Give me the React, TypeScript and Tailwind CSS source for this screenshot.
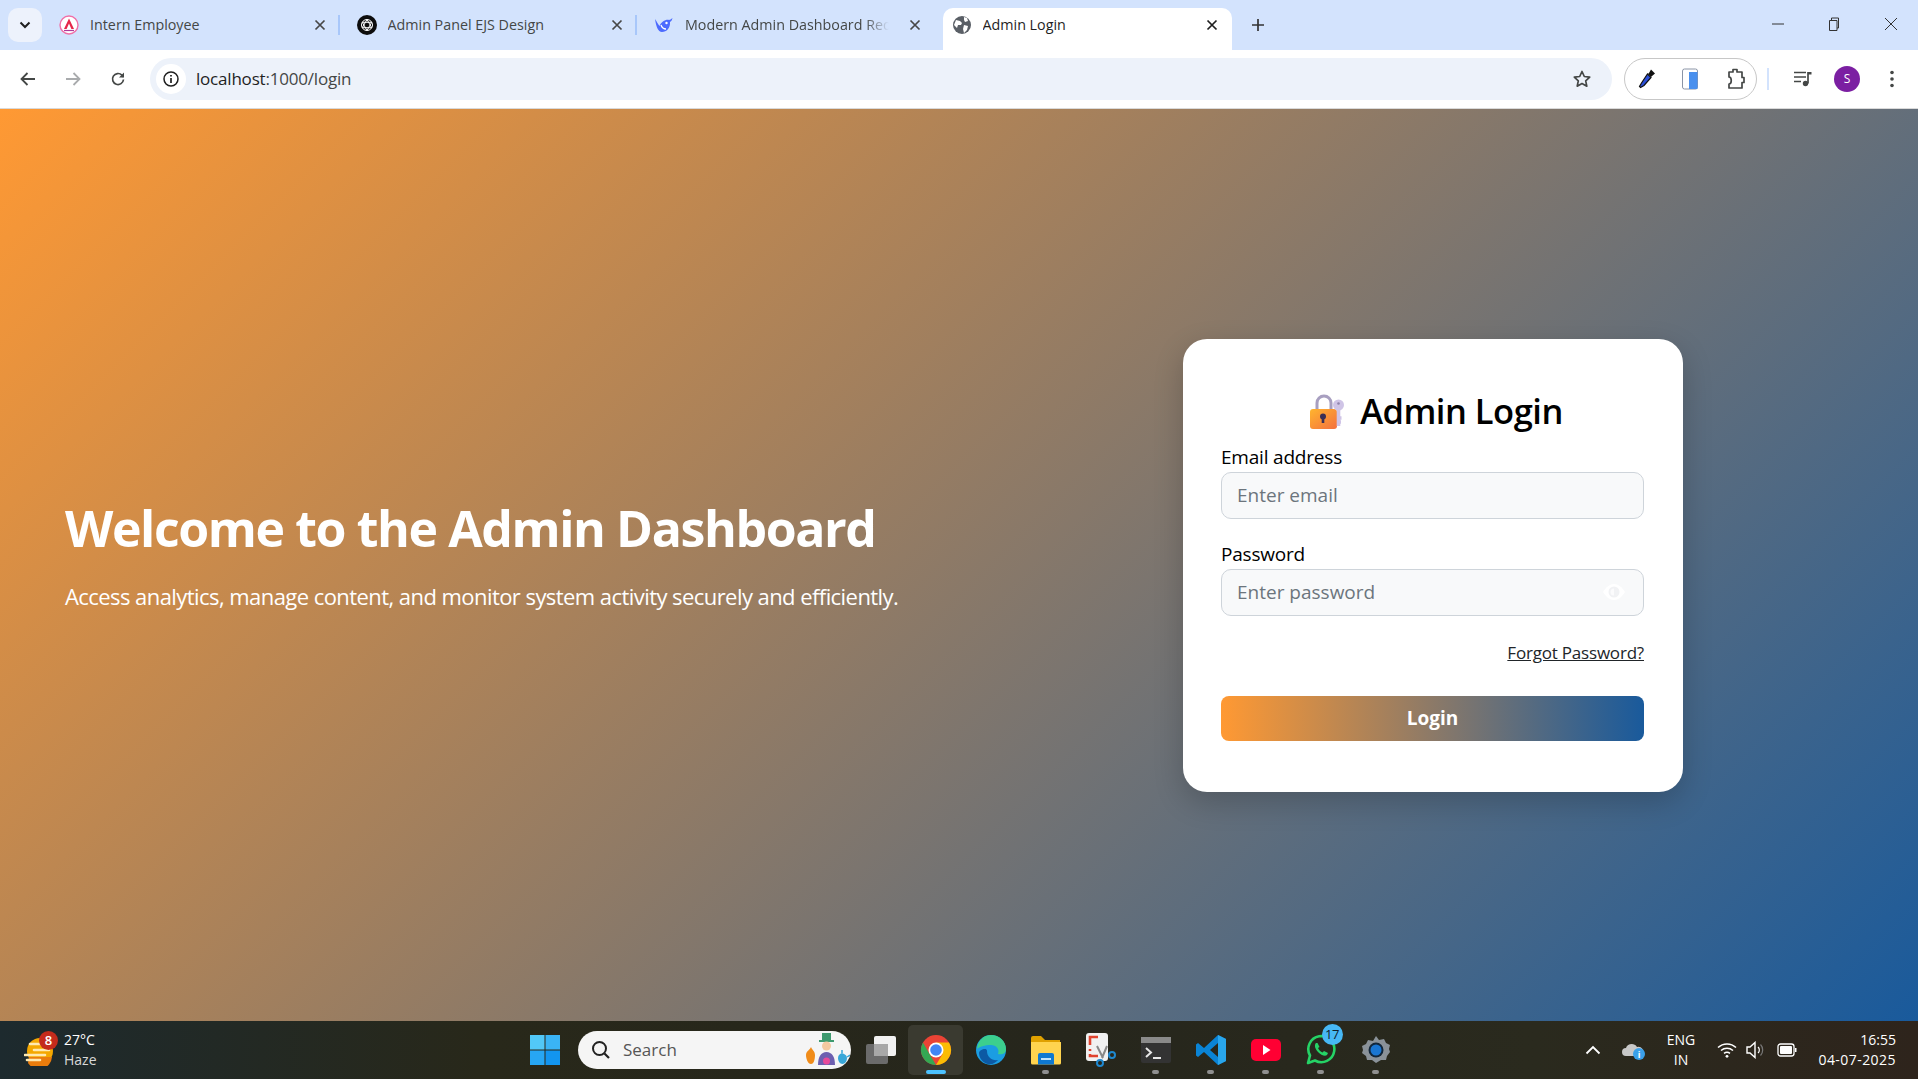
import React from "react";

const font = { fontFamily: '"Open Sans","Noto Sans",sans-serif' };

function Close({ dark }: { dark?: boolean }) {
  return (
    <svg width="12" height="12" viewBox="0 0 12 12" className="shrink-0">
      <path d="M1.500 1.500l9 9M10.500 1.500l-9 9" stroke={dark ? "#1f1f1f" : "#474747"} strokeWidth="1.700" />
    </svg>
  );
}

function TabIcon({ kind }: { kind: string }) {
  if (kind === "a")
    return (
      <svg width="20" height="20" viewBox="0 0 20 20">
        <circle cx="10" cy="10" r="9" fill="#fff" stroke="#f070a8" strokeWidth="1.400" />
        <path d="M10 3.500L15 14h-2.600L10 8.600 7.600 14H5z" fill="#e5274a" />
        <path d="M5 15.500h10" stroke="#b03a9a" strokeWidth="1.200" />
      </svg>
    );
  if (kind === "g")
    return (
      <svg width="20" height="20" viewBox="0 0 20 20">
        <circle cx="10" cy="10" r="10" fill="#0d0d0d" />
        <g fill="none" stroke="#fff" strokeWidth="1">
          <circle cx="10" cy="10" r="5.500" />
          <path d="M10 4.500l4.700 8.200H5.300zM10 15.500l-4.700-8.200h9.400z" />
        </g>
      </svg>
    );
  if (kind === "d")
    return (
      <svg width="20" height="20" viewBox="0 0 20 20">
        <path d="M1 4c2 3 3 5 4.500 7C7 7 12 4 15 5c1 0 2-1 3.500-2-.5 2-1 3-2.500 4 .5 6-3.500 10-8 10-4 0-6-6-7-13z" fill="#4d6bfe" />
        <circle cx="12.500" cy="8" r="1.200" fill="#fff" />
        <path d="M7 10c1 3 3 4 5 4" stroke="#fff" strokeWidth="1.300" fill="none" />
      </svg>
    );
  return (
    <svg width="18" height="18" viewBox="0 0 18 18">
      <circle cx="9" cy="9" r="9" fill="#5a5f66" />
      <path d="M3 4l4 1 2 2-1 2-3 0-1 3-3-3zM11 1l3 1 1 3-3 1-1-2zM11 9l4 1-1 4-3 3-1-4z" fill="#fff" />
    </svg>
  );
}

function Tab({ icon, title, active, fade }: { icon: string; title: string; active?: boolean; fade?: boolean }) {
  return (
    <div className={`relative flex h-[42px] shrink-0 items-center pr-[14px] pb-[8px] ${active ? "ml-[8px] w-[289.500px] rounded-t-[10px] bg-white pl-[9px] text-[#1f1f1f]" : "w-[297.500px] pl-[17px] text-[#444746]"}`}>
      <span className="flex w-[20px] shrink-0 justify-center"><TabIcon kind={icon} /></span>
      <span className={`ml-[11px] flex-1 overflow-hidden whitespace-nowrap text-[14.300px] ${fade ? "mr-[20px] [mask-image:linear-gradient(to_right,black_88%,transparent)]" : ""}`}>{title}</span>
      <Close dark={active} />
      {!active && !fade && <span className="absolute right-0 top-[7px] h-[20px] w-[2px] bg-[#a8c7fa]" />}
    </div>
  );
}

function BrowserChrome() {
  return (
    <div className="shrink-0" style={font}>
      <div className="flex h-[50px] items-end bg-[#d3e3fd] pl-[8px]">
        <div className="mb-[8px] mr-[6px] flex h-[34px] w-[34px] items-center justify-center rounded-[10px] bg-[#edf2fc]">
          <svg width="12" height="8" viewBox="0 0 12 8"><path d="M1.500 1.500L6 6l4.500-4.500" fill="none" stroke="#1f1f1f" strokeWidth="2" /></svg>
        </div>
        <div className="flex h-[42px] items-center">
          <div className="-ml-[6px] flex">
            <Tab icon="a" title="Intern Employee" />
            <Tab icon="g" title="Admin Panel EJS Design" />
            <Tab icon="d" title="Modern Admin Dashboard Redesign" fade />
            <Tab icon="w" title="Admin Login" active />
          </div>
          <svg width="14" height="14" viewBox="0 0 14 14" className="ml-[19px] -mt-[8px]"><path d="M7 1v12M1 7h12" stroke="#333" strokeWidth="1.700" /></svg>
        </div>
        <div className="ml-auto flex h-[50px] items-center text-[#333]">
          <svg width="14" height="14" viewBox="0 0 14 14" className="mr-[42px] -mt-[2px]"><path d="M1 7h12" stroke="#333" /></svg>
          <svg width="14" height="16" viewBox="0 0 14 16" className="mr-[43px] -mt-[2px]"><path d="M2.500 4.500h7.500v10h-7.500zM4.500 4.500v-2.500h7v10h-1.500" fill="none" stroke="#333" /></svg>
          <svg width="14" height="14" viewBox="0 0 14 14" className="mr-[20px] -mt-[2px]"><path d="M1 1l12 12M13 1L1 13" stroke="#333" /></svg>
        </div>
      </div>
      <div className="flex h-[58px] items-center bg-white">
        <div className="flex w-[150px] items-center pl-[19px]">
          <svg width="18" height="16" viewBox="0 0 18 16"><path d="M16 8H3M8.500 2L2.500 8l6 6" fill="none" stroke="#444746" strokeWidth="1.800" /></svg>
          <svg width="18" height="16" viewBox="0 0 18 16" className="ml-[27px]"><path d="M2 8h13M9.500 2l6 6-6 6" fill="none" stroke="#a9abad" strokeWidth="1.800" /></svg>
          <svg width="18" height="18" viewBox="0 0 18 18" className="ml-[27px]"><path d="M14.500 9.500a5.500 5.500 0 1 1-1.600-4.400L14.500 7" fill="none" stroke="#444746" strokeWidth="1.700" /><path d="M15 2.500V7.500H10z" fill="#444746" /></svg>
        </div>
        <div className="flex h-[42px] w-[1462px] items-center rounded-full bg-[#edf2fa] pl-[5px] pr-[20px]">
          <div className="flex h-[30px] w-[30px] items-center justify-center rounded-full bg-white ml-[1px]">
            <svg width="18" height="18" viewBox="0 0 18 18"><circle cx="9" cy="9" r="7" fill="none" stroke="#1f1f1f" strokeWidth="1.500" /><path d="M9 8v5M9 5v1.600" stroke="#1f1f1f" strokeWidth="1.700" /></svg>
          </div>
          <span className="ml-[10px] text-[17px] tracking-[-0.2px] text-[#1f1f1f]">localhost<span className="text-[#444746]">:1000/login</span></span>
          <svg width="20" height="20" viewBox="0 0 20 20" className="ml-auto"><path d="M10 2.500l2.300 5 5.400.6-4 3.700 1.100 5.400-4.800-2.700-4.800 2.700 1.100-5.400-4-3.700 5.400-.6z" fill="none" stroke="#444746" strokeWidth="1.700" strokeLinejoin="round" /></svg>
        </div>
        <div className="ml-[12px] flex h-[42px] w-[133px] items-center justify-between rounded-full border border-[#c7c7c7] pl-[12px] pr-[10px]">
          <svg width="20" height="22" viewBox="0 0 20 22"><path d="M14 1.500l4 4-3 2.500-1 1-3-3 1-1z" fill="#111" /><path d="M10.500 6l3.500 3.500-7 8-3.500 2-1-1 2-3.500z" fill="#2b4fd8" stroke="#111" strokeWidth="1.200" /></svg>
          <svg width="18" height="24" viewBox="0 0 18 24"><rect x="1.500" y="2" width="15" height="20" rx="2" fill="#fff" stroke="#8a94a6" /><rect x="8" y="5" width="8.500" height="17" fill="#4a90ee" /></svg>
          <svg width="20" height="24" viewBox="0 0 20 24" className="ml-[4px]"><path d="M3 5h4V2.500h4V5h5v5.500h2v5h-2V21H3v-4c3 0 3-7 0-7z" fill="#fff" stroke="#444746" strokeWidth="1.700" strokeLinejoin="round" /></svg>
        </div>
        <span className="ml-[10px] h-[22px] w-[2px] bg-[#d3e3fd]" />
        <svg width="20" height="20" viewBox="0 0 20 20" className="ml-[24px]"><path d="M1 3.500h12M1 8h12M1 12.500h7" stroke="#444746" strokeWidth="1.700" /><path d="M15 3v11.500" stroke="#444746" strokeWidth="1.700" /><circle cx="12.500" cy="14.500" r="2.700" fill="#444746" /><path d="M15 3h3.500v2.500H15z" fill="#444746" /></svg>
        <div className="ml-[21px] flex h-[26px] w-[26px] items-center justify-center rounded-full bg-[#7b1fa2] text-[12px] text-white">S</div>
        <svg width="4" height="18" viewBox="0 0 4 18" className="ml-[30px]"><circle cx="2" cy="2.500" r="1.800" fill="#444746" /><circle cx="2" cy="9" r="1.800" fill="#444746" /><circle cx="2" cy="15.500" r="1.800" fill="#444746" /></svg>
      </div>
      <div className="h-px bg-[#d9d9d9]" />
    </div>
  );
}

function LockEmoji() {
  return (
    <svg width="36" height="36" viewBox="0 0 36 36" className="shrink-0">
      <path d="M8 17V9a7 7 0 0 1 14 0v8" fill="none" stroke="#a89fc0" strokeWidth="3" />
      <rect x="1" y="15" width="27" height="20" rx="3" fill="url(#lk)" />
      <circle cx="14" cy="22.500" r="3" fill="#3a2f55" />
      <path d="M14 23v6" stroke="#3a2f55" strokeWidth="2.600" />
      <circle cx="29.500" cy="11" r="5.500" fill="#cfc4e6" />
      <circle cx="29.500" cy="9.500" r="1.300" fill="#8f84ac" />
      <path d="M29.500 15v17M29.500 24h3M29.500 28h2.500" stroke="#cfc4e6" strokeWidth="3.600" />
      <defs>
        <linearGradient id="lk" x1="0" y1="0" x2="1" y2="1">
          <stop offset="0" stopColor="#ffb52e" />
          <stop offset="1" stopColor="#f4703f" />
        </linearGradient>
      </defs>
    </svg>
  );
}

function LoginCard() {
  return (
    <div className="flex h-[453px] w-[500px] flex-col rounded-[24px] bg-white pl-[38px] pr-[39px] pt-[54px] shadow-[0_10px_30px_rgba(0,0,0,0.2)]">
      <div className="ml-[7px] flex h-[38px] items-center justify-center">
        <LockEmoji />
        <h2 className="ml-[15px] text-[34.500px] font-semibold leading-none tracking-[-0.5px] text-black">Admin Login</h2>
      </div>
      <label className="mt-[12px] text-[19px] leading-[29px] tracking-[-0.2px] text-black">Email address</label>
      <div className="flex h-[47px] items-center rounded-[10px] border border-[#ced4da] bg-[#f8f9fa] px-[15px] text-[19px] text-[#6c757d]">Enter email</div>
      <label className="mt-[21px] text-[19px] leading-[29px] tracking-[-0.2px] text-black">Password</label>
      <div className="flex h-[47px] items-center justify-between rounded-[10px] border border-[#ced4da] bg-[#f8f9fa] pl-[15px] pr-[18px] text-[19px] text-[#6c757d]">
        <span>Enter password</span>
        <svg width="22" height="16" viewBox="0 0 22 16"><path d="M0 8c3-5 7-8 11-8s8 3 11 8c-3 5-7 8-11 8S3 13 0 8z" fill="#ffffff" /><circle cx="11" cy="8" r="5.500" fill="#f1f2f4" /><path d="M11 4.500a3.500 3.500 0 0 0 0 7z" fill="#fbfbfc" /></svg>
      </div>
      <div className="mt-[25px] text-right text-[17px] leading-[24px] tracking-[-0.2px] text-[#212529] underline">Forgot Password?</div>
      <button className="mt-[31px] h-[45px] rounded-[8px] bg-[linear-gradient(to_right,#ff9933,#195a9c)] text-[19px] font-bold text-white">Login</button>
    </div>
  );
}

function Win() {
  return (
    <svg width="30" height="30" viewBox="0 0 30 30">
      <rect x="0" y="0" width="14.500" height="14.500" fill="#52c8f7" />
      <rect x="15.500" y="0" width="14.500" height="14.500" fill="#3ab4f5" />
      <rect x="0" y="15.500" width="14.500" height="14.500" fill="#27a6f3" />
      <rect x="15.500" y="15.500" width="14.500" height="14.500" fill="#1295f0" />
    </svg>
  );
}

function AppSlot({ children, dot, active }: { children: React.ReactNode; dot?: boolean; active?: boolean }) {
  return (
    <div className={`relative flex h-[50px] w-[55px] items-center justify-center ${active ? "rounded-[5px] bg-[#3a3a30]" : ""}`}>
      {children}
      {dot && <span className="absolute bottom-[1px] h-[4px] w-[7px] rounded-full bg-[#8f8f8f]" />}
      {active && <span className="absolute bottom-[1px] h-[4px] w-[20px] rounded-full bg-[#4cc2ff]" />}
    </div>
  );
}

function Taskbar() {
  return (
    <div className="flex h-[58px] shrink-0 items-center bg-[linear-gradient(to_right,#1d2a2e,#28281a_25%,#26261c_55%,#2a2a1e_80%,#2e241c)] text-white" style={font}>
      <div className="flex w-[530px] items-center pl-[24px]">
        <div className="relative h-[30px] w-[30px]">
          <svg width="30" height="30" viewBox="0 0 30 30" className="absolute top-[1px]">
            <circle cx="16" cy="15" r="13" fill="#f5a800" />
            <path d="M4 27a13 13 0 0 0 24 -6H5z" fill="#ea7c0c" />
            <path d="M6 8h16M10 14h15M1 19h20M3 24h13" stroke="#ffe9b0" strokeWidth="2.600" strokeLinecap="round" />
          </svg>
          <span className="absolute -top-[4px] left-[15px] flex h-[19px] w-[19px] items-center justify-center rounded-full bg-[#c42b1c] text-[13px] font-semibold">8</span>
        </div>
        <div className="ml-[10px] -mt-[1px] text-[14px] leading-[20px]">
          <div>27°C</div>
          <div className="text-[#d8d8d8]">Haze</div>
        </div>
      </div>
      <Win />
      <div className="ml-[18px] flex h-[38px] w-[273px] items-center rounded-full bg-[#f5f5f5] pl-[13px] text-[#555]">
        <svg width="20" height="20" viewBox="0 0 20 20"><circle cx="8.500" cy="8.500" r="6.500" fill="none" stroke="#222" strokeWidth="2" /><path d="M13.500 13.500L18 18" stroke="#222" strokeWidth="2.200" /></svg>
        <span className="ml-[12px] text-[17px]">Search</span>
        <svg width="46" height="34" viewBox="0 0 46 34" className="ml-auto mr-[1px]">
          <path d="M2 22c0-4 4-5 5-8 1 3 4 4 4 8s-1 9-4 9-5-5-5-9z" fill="#f08c1a" />
          <rect x="18" y="0" width="9" height="8" fill="#3e9a6f" />
          <rect x="15" y="7" width="15" height="2" fill="#3e9a6f" />
          <circle cx="22.500" cy="13" r="4.500" fill="#f3c9a0" />
          <path d="M14 32c0-8 3-13 8.500-13S31 24 31 32z" fill="#6d5fb0" />
          <circle cx="22.500" cy="28" r="3.500" fill="#e84a9a" />
          <path d="M34 25c0-3 2-4 4-5 2 1 5 2 5 5s-2 6-4.500 6S34 28 34 25z" fill="#38a7d8" />
          <path d="M38 17v3M43 24l3-2" stroke="#38a7d8" strokeWidth="1.500" />
        </svg>
      </div>
      <div className="ml-[2px] flex items-center">
        <AppSlot>
          <svg width="32" height="30" viewBox="0 0 32 30"><rect x="1" y="9" width="22" height="20" rx="2" fill="#6b6b6b" /><rect x="9" y="1" width="22" height="20" rx="2" fill="#f2f2f2" /><rect x="9" y="9" width="14" height="12" fill="#a8a8a8" /></svg>
        </AppSlot>
        <AppSlot active>
          <svg width="32" height="32" viewBox="0 0 32 32">
            <circle cx="16" cy="16" r="15" fill="#ea4335" />
            <path d="M16 31A15 15 0 0 1 3 8.500L9.500 20z" fill="#34a853" />
            <path d="M16 31a15 15 0 0 0 13-22.500H16l6.500 11.500z" fill="#fbbc04" />
            <circle cx="16" cy="16" r="7.500" fill="#fff" />
            <circle cx="16" cy="16" r="5.800" fill="#4285f4" />
          </svg>
        </AppSlot>
        <AppSlot>
          <svg width="32" height="32" viewBox="0 0 32 32">
            <circle cx="16" cy="16" r="15" fill="#1b9de2" />
            <path d="M2 15C3 6 9 1 16 1c8 0 15 6 15 14 0 5-5 6-8 5 2-5-2-9-7-9-6 0-12 2-14 4z" fill="#3ccf8e" />
            <path d="M12 17c0 6 5 10 11 9-3 3-6 5-10 4-5-1-9-6-9-11 0-3 8-6 8-2z" fill="#0c59a4" />
          </svg>
        </AppSlot>
        <AppSlot dot>
          <svg width="32" height="30" viewBox="0 0 32 30"><path d="M1 3a2 2 0 0 1 2-2h8l4 4h15v6H1z" fill="#e0a100" /><path d="M1 7h30v21a1.500 1.500 0 0 1-1.500 1.500h-27A1.500 1.500 0 0 1 1 28z" fill="#ffd44f" /><path d="M10 18h12a2 2 0 0 1 2 2v9.500H8V20a2 2 0 0 1 2-2z" fill="#0f79d0" /><path d="M11 24h10" stroke="#bfe3fb" strokeWidth="2" /></svg>
        </AppSlot>
        <AppSlot>
          <svg width="32" height="34" viewBox="0 0 32 34"><rect x="1" y="0" width="22" height="28" rx="3" fill="#f1f1f1" /><path d="M5 12V4h8M5 16v2M5 21v2h8" stroke="#e0432f" strokeWidth="2.600" fill="none" /><path d="M12 13l6 12M22 13l-5 12" stroke="#888" strokeWidth="2" /><circle cx="15" cy="30" r="3" fill="none" stroke="#1e88d0" strokeWidth="2" /><circle cx="27" cy="22" r="3" fill="none" stroke="#1e88d0" strokeWidth="2" /></svg>
        </AppSlot>
        <AppSlot dot>
          <svg width="32" height="28" viewBox="0 0 32 28"><rect x="1" y="1" width="30" height="26" rx="2" fill="#333" /><rect x="1" y="1" width="30" height="6" fill="#8a8a8a" /><path d="M6 12l5 4.500-5 4.500" fill="none" stroke="#e6e6e6" strokeWidth="2" /><path d="M13 22h8" stroke="#e6e6e6" strokeWidth="2" /></svg>
        </AppSlot>
        <AppSlot dot>
          <svg width="32" height="32" viewBox="0 0 32 32"><path d="M23 1l8 4v22l-8 4-14-13-6 5-2-1.500v-11L3 9l6 5zM23 9l-8 7 8 7z" fill="#0a84d6" /><path d="M23 1l8 4v22l-8 4z" fill="#29a6ec" /></svg>
        </AppSlot>
        <AppSlot dot>
          <svg width="30" height="24" viewBox="0 0 30 24"><rect x="0" y="1" width="30" height="22" rx="5" fill="#ff0033" /><path d="M12 7l7.500 5-7.500 5z" fill="#fff" /></svg>
        </AppSlot>
        <AppSlot dot>
          <div className="relative">
            <svg width="32" height="32" viewBox="0 0 32 32"><path d="M3 29l2-7.500A13 13 0 1 1 10 26.500z" fill="none" stroke="#25d366" strokeWidth="2.600" strokeLinejoin="round" /><path d="M11 9c-2 2-1 6 2 9s7 5 9 3l1-2-4-2-1.500 1.500c-2-1-3.500-2.500-4.500-4.500L14.500 13l-2-4z" fill="#25d366" /></svg>
            <span className="absolute -right-[6px] -top-[10px] flex h-[21px] w-[21px] items-center justify-center rounded-full bg-[#47b8f5] text-[13px] tracking-[-0.5px] text-[#10202a]">17</span>
          </div>
        </AppSlot>
        <AppSlot dot>
          <svg width="30" height="30" viewBox="0 0 30 30"><path d="M15 1l3 4 5-1 2 4 4 2-1 4 1 3-3 4-1 4-5 0-5 3-4-3-5 0-1-4-4-3 1-3-1-4 4-2 2-4 5 1z" fill="#8a9299" /><circle cx="15" cy="15" r="7.500" fill="#12263a" /><circle cx="15" cy="15" r="5.500" fill="#1a76d2" /></svg>
        </AppSlot>
      </div>
      <div className="ml-auto flex items-center pr-[22px] text-[14px]">
        <svg width="16" height="10" viewBox="0 0 16 10"><path d="M1.500 8.500L8 2l6.500 6.500" fill="none" stroke="#fff" strokeWidth="1.800" /></svg>
        <div className="relative ml-[21px] h-[18px] w-[22px]">
          <svg width="22" height="16" viewBox="0 0 22 16"><path d="M4 15a4 4 0 0 1 0-8c1-4 8-6 11-1a4 4 0 0 1 3 9z" fill="#c8c8c8" /></svg>
          <span className="absolute -bottom-[1px] -right-[1px] flex h-[12px] w-[12px] items-center justify-center rounded-full bg-[#3aa0ea] text-[9px] font-bold leading-none">i</span>
        </div>
        <div className="ml-[19px] w-[36px] text-center text-[14px] leading-[20px]"><div>ENG</div><div>IN</div></div>
        <svg width="20" height="16" viewBox="0 0 20 16" className="ml-[18px]"><path d="M1 5.500a13 13 0 0 1 18 0M4 8.500a9 9 0 0 1 12 0M7 11.300a5 5 0 0 1 6 0" fill="none" stroke="#fff" strokeWidth="1.500" /><circle cx="10" cy="14.300" r="1.400" fill="#fff" /></svg>
        <svg width="20" height="18" viewBox="0 0 20 18" className="ml-[9px]"><path d="M1 6h3l5-4.500v15L4 12H1z" fill="none" stroke="#fff" strokeWidth="1.400" /><path d="M12 6a4 4 0 0 1 0 6" fill="none" stroke="#fff" strokeWidth="1.200" /><path d="M14.500 3.500a8 8 0 0 1 0 11" fill="none" stroke="#777" strokeWidth="1.200" /></svg>
        <svg width="20" height="14" viewBox="0 0 20 14" className="ml-[11px]"><rect x="1" y="1" width="16" height="12" rx="2.500" fill="none" stroke="#fff" strokeWidth="1.300" /><rect x="3" y="3" width="12" height="8" rx="1" fill="#fff" /><rect x="18" y="5" width="1.500" height="4" fill="#fff" /></svg>
        <div className="ml-[19px] w-[80px] text-right text-[14px] leading-[20px]"><div>16:55</div><div className="whitespace-nowrap tracking-[0.45px]">04-07-2025</div></div>
      </div>
    </div>
  );
}

export default function App() {
  return (
    <div className="flex h-[1079px] w-[1918px] flex-col overflow-hidden" style={font}>
      <BrowserChrome />
      <main className="flex flex-1 items-center justify-between bg-[linear-gradient(135deg,#ff9933,#195a9c)] pl-[65px] pr-[235px]">
        <div className="-mt-[21px] text-white">
          <h1 className="text-[50px] font-bold leading-[60px] tracking-[-1.4px]">Welcome to the Admin Dashboard</h1>
          <p className="mt-[23px] text-[22px] leading-[30px] tracking-[-0.56px]">Access analytics, manage content, and monitor system activity securely and efficiently.</p>
        </div>
        <LoginCard />
      </main>
      <Taskbar />
    </div>
  );
}
